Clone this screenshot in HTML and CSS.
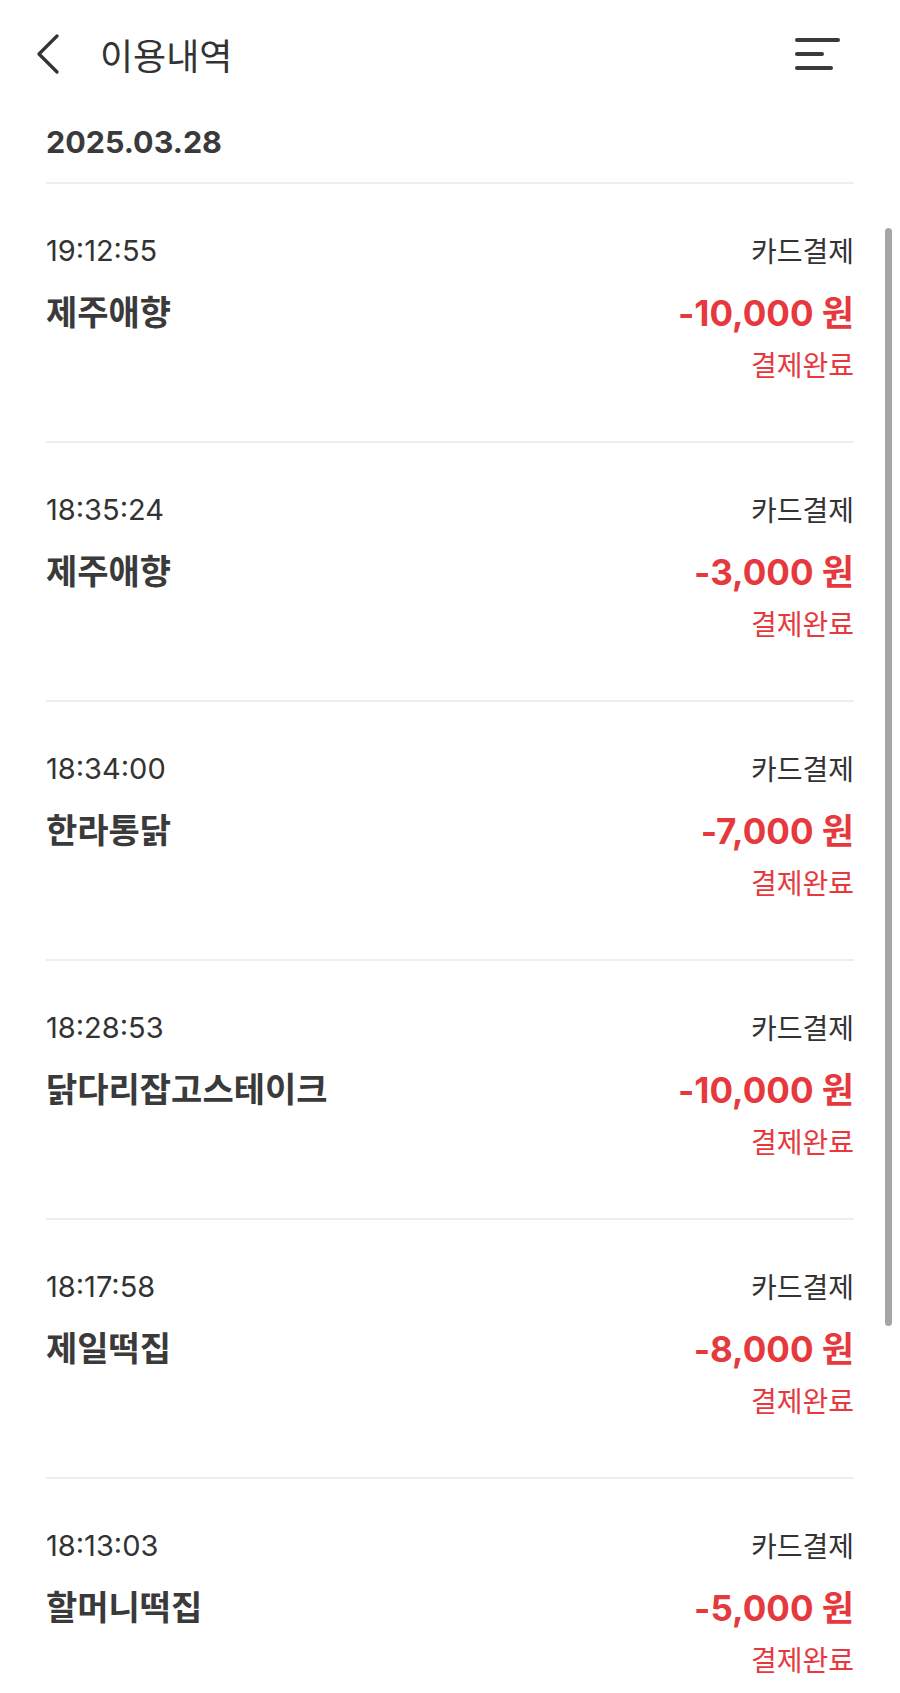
FILE: index.html
```html
<!DOCTYPE html>
<html lang="ko">
<head>
<meta charset="utf-8">
<title>이용내역</title>
<link rel="stylesheet" href="styles.css">
</head>
<body>
<div class="screen">
  <header class="topbar">
    <button class="back" aria-label="뒤로">
      <svg width="24" height="40" viewBox="0 0 24 40"><path d="M21 2 L3 20 L21 38" fill="none" stroke="#333" stroke-width="3.2" stroke-linecap="round" stroke-linejoin="round"/></svg>
    </button>
    <h1 class="title">이용내역</h1>
    <button class="menu" aria-label="메뉴">
      <span class="bar bar-long"></span>
      <span class="bar bar-short"></span>
      <span class="bar bar-mid"></span>
    </button>
  </header>

  <div class="date">2025.03.28</div>

  <ul class="list">
    <li class="item">
      <div class="row"><span class="time">19:12:55</span><span class="method">카드결제</span></div>
      <div class="row row-main"><span class="name">제주애향</span><span class="amount">-10,000 원</span></div>
      <div class="status">결제완료</div>
    </li>
    <li class="item">
      <div class="row"><span class="time">18:35:24</span><span class="method">카드결제</span></div>
      <div class="row row-main"><span class="name">제주애향</span><span class="amount">-3,000 원</span></div>
      <div class="status">결제완료</div>
    </li>
    <li class="item">
      <div class="row"><span class="time">18:34:00</span><span class="method">카드결제</span></div>
      <div class="row row-main"><span class="name">한라통닭</span><span class="amount">-7,000 원</span></div>
      <div class="status">결제완료</div>
    </li>
    <li class="item">
      <div class="row"><span class="time">18:28:53</span><span class="method">카드결제</span></div>
      <div class="row row-main"><span class="name">닭다리잡고스테이크</span><span class="amount">-10,000 원</span></div>
      <div class="status">결제완료</div>
    </li>
    <li class="item">
      <div class="row"><span class="time">18:17:58</span><span class="method">카드결제</span></div>
      <div class="row row-main"><span class="name">제일떡집</span><span class="amount">-8,000 원</span></div>
      <div class="status">결제완료</div>
    </li>
    <li class="item">
      <div class="row"><span class="time">18:13:03</span><span class="method">카드결제</span></div>
      <div class="row row-main"><span class="name">할머니떡집</span><span class="amount">-5,000 원</span></div>
      <div class="status">결제완료</div>
    </li>
  </ul>

  <div class="scrollbar"></div>
</div>
</body>
</html>
```

FILE: styles.css
```css
html, body {
  margin: 0;
  padding: 0;
  background: #ffffff;
  overflow: hidden;
}

body {
  font-family: Inter, "Noto Sans CJK KR", sans-serif;
  color: #333333;
}

.screen {
  position: relative;
  width: 900px;
  height: 1693px;
  overflow: hidden;
}

.topbar {
  height: 108px;
  display: flex;
  align-items: center;
  padding: 0 60px 0 36px;
}

.back {
  width: 24px;
  height: 40px;
  padding: 0;
  border: 0;
  background: none;
  display: flex;
}

.title {
  margin: 0 0 0 40px;
  font-family: "Noto Sans CJK KR", sans-serif;
  font-size: 36px;
  font-weight: 400;
  line-height: 40px;
  color: #333333;
  flex: 1;
}

.menu {
  width: 45px;
  height: 40px;
  padding: 0;
  border: 0;
  background: none;
  display: flex;
  flex-direction: column;
  justify-content: center;
  gap: 10.5px;
}

.bar {
  display: block;
  height: 3.5px;
  border-radius: 2px;
  background: #3a3a3a;
}
.bar-long { width: 45px; }
.bar-short { width: 29px; }
.bar-mid { width: 38px; }

.date {
  margin: 0 46px;
  padding: 14px 0 20px;
  font-size: 30.5px;
  font-weight: 700;
  line-height: 40px;
  color: #3a3a3a;
  border-bottom: 2px solid #eeeeee;
}

.list {
  list-style: none;
  margin: 0 46px;
  padding: 0;
}

.item {
  padding: 46px 0 57px;
  border-bottom: 2px solid #eeeeee;
}

.row {
  display: flex;
  justify-content: space-between;
  align-items: center;
  height: 40px;
}

.row-main {
  height: 44px;
  margin-top: 18px;
}

.time {
  font-size: 29px;
  font-weight: 400;
  color: #333333;
}

.method {
  font-family: "Noto Sans CJK KR", sans-serif;
  font-size: 28px;
  color: #333333;
}

.name {
  font-family: "Noto Sans CJK KR", sans-serif;
  font-size: 34px;
  font-weight: 700;
  color: #3a3a3a;
}

.amount {
  font-size: 35px;
  font-weight: 700;
  color: #e6393d;
}

.status {
  margin-top: 12px;
  height: 40px;
  line-height: 40px;
  text-align: right;
  font-family: "Noto Sans CJK KR", sans-serif;
  font-size: 28px;
  color: #e6393d;
}

.scrollbar {
  position: absolute;
  left: 885px;
  top: 228px;
  width: 7px;
  height: 1098px;
  border-radius: 4px;
  background: #a6a6a6;
}
```
